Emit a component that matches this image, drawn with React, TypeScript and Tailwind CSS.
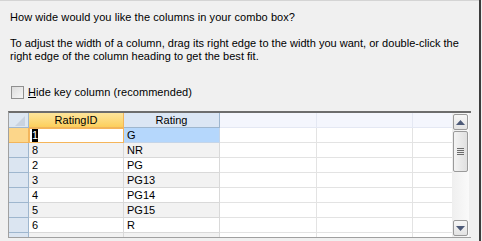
import React from "react";

const rows = [
  ["8", "NR"],
  ["2", "PG"],
  ["3", "PG13"],
  ["4", "PG14"],
  ["5", "PG15"],
  ["6", "R"],
];

function EmptyCells({ h }: { h: string }) {
  return (
    <>
      <div className={`w-[97px] ${h} border-r border-b border-[#e3e3e3] bg-white`} />
      <div className={`w-[96px] ${h} border-r border-b border-[#e3e3e3] bg-white`} />
      <div className={`w-[39px] ${h} border-b border-[#e3e3e3] bg-white`} />
    </>
  );
}

export default function App() {
  return (
    <div
      className="w-[482px] h-[241px] bg-[#f0f0f0] flex overflow-hidden"
      style={{ fontFamily: '"Liberation Sans", Arial, sans-serif' }}
    >
      <div className="w-[479px] h-full border-t border-[#d4d4d4] flex flex-col text-[11px] text-black">
        <div className="pl-[10px] pt-[10px] leading-[13px] tracking-[0.07px]">
          How wide would you like the columns in your combo box?
        </div>
        <div className="pl-[10px] pt-[13px] leading-[13px] tracking-[0.02px]">
          To adjust the width of a column, drag its right edge to the width you want, or double-click the
          <br />
          right edge of the column heading to get the best fit.
        </div>
        <div className="flex items-center pl-[11px] pt-[23px] h-[36px]">
          <div className="w-[13px] h-[13px] border border-[#8f8f8f] bg-gradient-to-br from-[#dcdcdc] to-[#f6f6f6]" />
          <span className="ml-[4px] leading-[13px] tracking-[0.07px]">
            <span className="underline">H</span>ide key column (recommended)
          </span>
        </div>
        <div className="h-[12px]" />
        {/* grid */}
        <div className="ml-[8px] w-[463px] h-[126px] border-t-2 border-l border-t-[#6d6d6d] border-l-[#a0a0a0] flex overflow-hidden">
          <div className="w-[443px] flex flex-col">
            {/* header */}
            <div className="flex h-[15px]">
              <div className="w-[20px] h-[15px] border-r border-b border-[#9eb6ce] bg-[#dde7f2] relative overflow-hidden">
                <svg width="20" height="15" className="absolute left-0 top-0">
                  <polygon points="16,3 16,13 6,13" fill="#c9d3e0" />
                </svg>
              </div>
              <div className="w-[95px] h-[15px] border-r border-b border-[#f2b55b] bg-gradient-to-b from-[#fde59b] to-[#fccf5b] flex items-center justify-center leading-[13px]">
                RatingID
              </div>
              <div className="w-[96px] h-[15px] border-r border-b border-[#9eb6ce] bg-[#dbe6f4] flex items-center justify-center leading-[13px]">
                Rating
              </div>
              <div className="w-[97px] h-[15px] border-r border-b border-[#e4e8f3] bg-[#f4f6fd]" />
              <div className="w-[96px] h-[15px] border-r border-b border-[#e4e8f3] bg-[#f4f6fd]" />
              <div className="w-[39px] h-[15px] border-b border-[#e4e8f3] bg-[#f4f6fd]" />
            </div>
            {/* selected row */}
            <div className="flex h-[15px]">
              <div className="w-[20px] h-[15px] border-r border-b border-[#f2b55b] bg-[#fcd68a]" />
              <div className="w-[95px] h-[15px] border border-[#f5b55a] bg-white flex items-center pl-[2px] leading-[13px]">
                <span className="bg-black text-white">1</span>
              </div>
              <div className="w-[96px] h-[15px] border-r border-b border-[#c5d5e8] bg-[#b5d7fc] flex items-center pl-[3px] leading-[13px]">
                G
              </div>
              <EmptyCells h="h-[15px]" />
            </div>
            {rows.map((r, i) => (
              <div key={r[0]} className="flex h-[15px]">
                <div className="w-[20px] h-[15px] border-r border-b border-[#9eb6ce] bg-[#dbe5f1]" />
                <div
                  className={`w-[95px] h-[15px] border-r border-b border-[#d9d9d9] flex items-center pl-[3px] leading-[13px] ${
                    i % 2 === 0 ? "bg-[#f2f2f2]" : "bg-white"
                  }`}
                >
                  {r[0]}
                </div>
                <div
                  className={`w-[96px] h-[15px] border-r border-b border-[#d9d9d9] flex items-center pl-[3px] leading-[13px] ${
                    i % 2 === 0 ? "bg-[#f2f2f2]" : "bg-white"
                  }`}
                >
                  {r[1]}
                </div>
                <EmptyCells h="h-[15px]" />
              </div>
            ))}
            <div className="flex h-[5px]">
              <div className="w-[20px] h-[5px] border-r border-[#9eb6ce] bg-[#dbe5f1]" />
              <div className="w-[95px] h-[5px] border-r border-[#d9d9d9] bg-[#f2f2f2]" />
              <div className="w-[96px] h-[5px] border-r border-[#d9d9d9] bg-[#f2f2f2]" />
              <div className="w-[97px] h-[5px] border-r border-[#e3e3e3] bg-white" />
              <div className="w-[96px] h-[5px] border-r border-[#e3e3e3] bg-white" />
              <div className="w-[39px] h-[5px] bg-white" />
            </div>
          </div>
          {/* scrollbar */}
          <div className="w-[17px] h-full bg-gradient-to-r from-[#efefef] to-[#fafafa] flex flex-col items-center pt-[1px]">
            <div className="w-[15px] h-[16px] rounded-[2px] border border-[#9a9a9a] bg-gradient-to-b from-[#f7f7f7] to-[#e3e3e3] flex items-center justify-center">
              <svg width="9" height="5"><polygon points="4.5,0 9,5 0,5" fill="#4d5a78" /></svg>
            </div>
            <div className="mt-[1px] w-[15px] h-[41px] rounded-[2px] border border-[#9a9a9a] bg-gradient-to-r from-[#f3f3f3] to-[#e0e0e0] flex flex-col items-center justify-center gap-[1px]">
              <div className="w-[7px] h-[1px] bg-[#6b6b6b]" />
              <div className="w-[7px] h-[1px] bg-[#6b6b6b]" />
              <div className="w-[7px] h-[1px] bg-[#6b6b6b]" />
              <div className="w-[7px] h-[1px] bg-[#6b6b6b]" />
            </div>
            <div className="flex-1" />
            <div className="mb-[1px] w-[15px] h-[16px] rounded-[2px] border border-[#9a9a9a] bg-gradient-to-b from-[#f7f7f7] to-[#e3e3e3] flex items-center justify-center">
              <svg width="9" height="5"><polygon points="0,0 9,0 4.5,5" fill="#4d5a78" /></svg>
            </div>
          </div>
          <div className="w-[2px] h-full bg-[#f0f0f0]" />
        </div>
        <div className="ml-[8px] w-[463px] h-[1px] bg-[#a0a0a0]" />
      </div>
      <div className="w-[2px] h-full bg-[#3c3c3c]" />
      <div className="w-[1px] h-full bg-[#f0f0f0]" />
    </div>
  );
}
